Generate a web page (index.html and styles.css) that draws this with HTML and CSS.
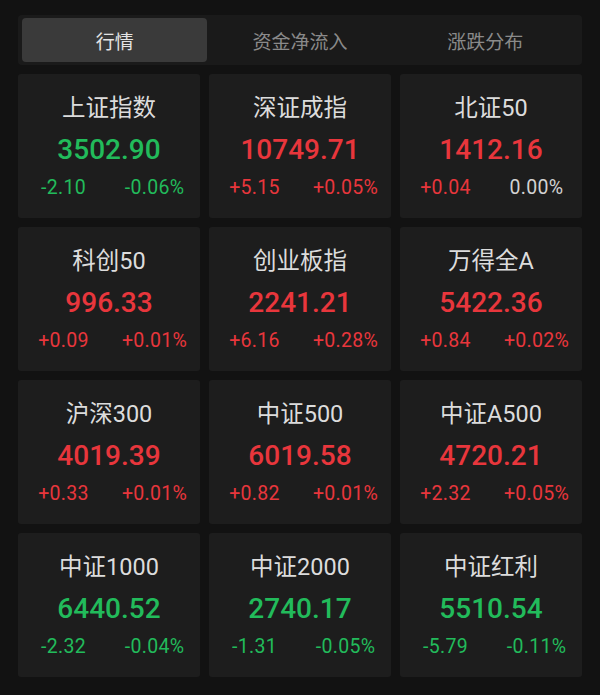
FILE: index.html
```html
<!DOCTYPE html>
<html lang="zh-CN">
<head>
<meta charset="utf-8">
<link rel="stylesheet" href="styles.css">
</head>
<body>
<div class="page">
  <div class="tabs">
    <div class="tab active">行情</div>
    <div class="tab">资金净流入</div>
    <div class="tab">涨跌分布</div>
  </div>
  <div class="grid">
    <div class="card"><div class="name">上证指数</div><div class="value down">3502.90</div><div class="chg"><span class="down">-2.10</span><span class="down">-0.06%</span></div></div>
    <div class="card"><div class="name">深证成指</div><div class="value up">10749.71</div><div class="chg"><span class="up">+5.15</span><span class="up">+0.05%</span></div></div>
    <div class="card"><div class="name">北证50</div><div class="value up">1412.16</div><div class="chg"><span class="up">+0.04</span><span class="flat">0.00%</span></div></div>

    <div class="card"><div class="name">科创50</div><div class="value up">996.33</div><div class="chg"><span class="up">+0.09</span><span class="up">+0.01%</span></div></div>
    <div class="card"><div class="name">创业板指</div><div class="value up">2241.21</div><div class="chg"><span class="up">+6.16</span><span class="up">+0.28%</span></div></div>
    <div class="card"><div class="name">万得全A</div><div class="value up">5422.36</div><div class="chg"><span class="up">+0.84</span><span class="up">+0.02%</span></div></div>

    <div class="card"><div class="name">沪深300</div><div class="value up">4019.39</div><div class="chg"><span class="up">+0.33</span><span class="up">+0.01%</span></div></div>
    <div class="card"><div class="name">中证500</div><div class="value up">6019.58</div><div class="chg"><span class="up">+0.82</span><span class="up">+0.01%</span></div></div>
    <div class="card"><div class="name">中证A500</div><div class="value up">4720.21</div><div class="chg"><span class="up">+2.32</span><span class="up">+0.05%</span></div></div>

    <div class="card"><div class="name">中证1000</div><div class="value down">6440.52</div><div class="chg"><span class="down">-2.32</span><span class="down">-0.04%</span></div></div>
    <div class="card"><div class="name">中证2000</div><div class="value down">2740.17</div><div class="chg"><span class="down">-1.31</span><span class="down">-0.05%</span></div></div>
    <div class="card"><div class="name">中证红利</div><div class="value down">5510.54</div><div class="chg"><span class="down">-5.79</span><span class="down">-0.11%</span></div></div>
  </div>
</div>
</body>
</html>
```
FILE: styles.css
```css
* { box-sizing: border-box; }
html, body {
  margin: 0;
  padding: 0;
  background: #121212;
}
body {
  font-family: "Roboto", "Noto Sans CJK SC", sans-serif;
  width: 600px;
  height: 695px;
  overflow: hidden;
}
.page {
  padding: 15px 18px 0 18px;
}
.tabs {
  display: grid;
  grid-template-columns: 1fr 1fr 1fr;
  height: 50px;
  padding: 3px 4px;
  background: #1a1a1a;
  border-radius: 4px;
}
.tab {
  display: flex;
  align-items: center;
  justify-content: center;
  font-family: "Noto Sans CJK SC", sans-serif;
  font-size: 19px;
  color: #8a8a8a;
  border-radius: 4px;
}
.tab.active {
  background: #3a3a3a;
  color: #e4e4e4;
}
.grid {
  margin-top: 9px;
  display: grid;
  grid-template-columns: repeat(3, 182px);
  grid-auto-rows: 144px;
  column-gap: 9px;
  row-gap: 9px;
}
.card {
  background: #1d1d1d;
  border-radius: 3px;
  display: flex;
  flex-direction: column;
  align-items: center;
  padding-top: 18px;
}
.name {
  font-family: "Roboto", "Noto Sans CJK SC", sans-serif;
  font-size: 23.5px;
  line-height: 32px;
  color: #dcdcdc;
}
.value {
  font-size: 28px;
  font-weight: 500;
  line-height: 36px;
  margin-top: 8px;
}
.chg {
  width: 100%;
  display: grid;
  grid-template-columns: 1fr 1fr;
  font-size: 19.5px;
  line-height: 26px;
  margin-top: 7px;
  letter-spacing: 0.3px;
}
.chg span { text-align: center; }
.up { color: #e8363c; }
.down { color: #22bb5b; }
.flat { color: #d2d2d2; }
```
